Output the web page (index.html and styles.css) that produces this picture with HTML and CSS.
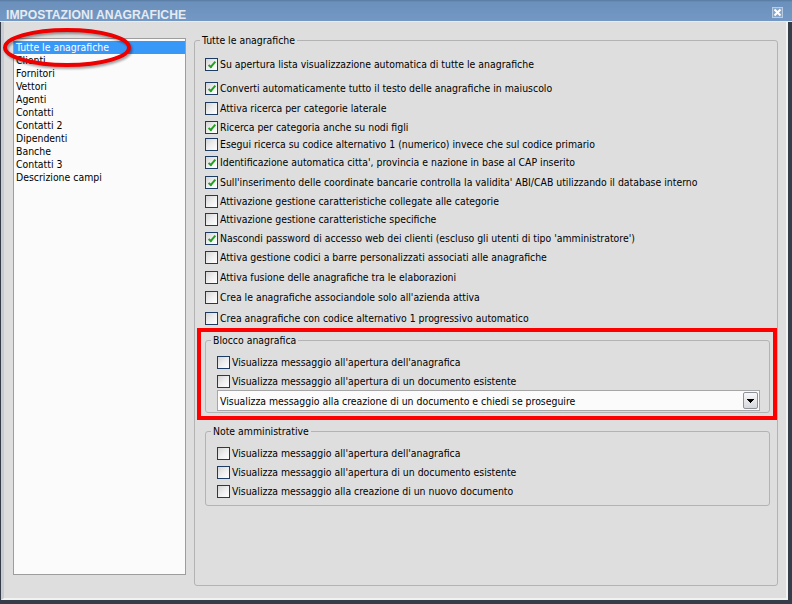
FILE: index.html
```html
<!DOCTYPE html>
<html lang="it">
<head>
    <meta charset="UTF-8">
    <meta name="viewport" content="width=device-width, initial-scale=1.0">
    <link rel="stylesheet" href="styles.css">
    <title>Impostazioni anagrafiche</title>
</head>
<body>
    <div class="window">
        <div class="titlebar">
            <span class="title">IMPOSTAZIONI ANAGRAFICHE</span>
            <span class="close-btn">
                <svg width="9" height="9" viewBox="0 0 9 9"><path d="M1.5 1.5 L7.5 7.5 M7.5 1.5 L1.5 7.5" stroke="#fff" stroke-width="2" fill="none"/></svg>
            </span>
        </div>
        <div class="frame">
            <div class="client">
                <ul class="list">
                    <li class="selected">Tutte le anagrafiche</li>
                    <li>Clienti</li>
                    <li>Fornitori</li>
                    <li>Vettori</li>
                    <li>Agenti</li>
                    <li>Contatti</li>
                    <li>Contatti 2</li>
                    <li>Dipendenti</li>
                    <li>Banche</li>
                    <li>Contatti 3</li>
                    <li>Descrizione campi</li>
                </ul>

                <fieldset class="group main-group">
                    <legend>Tutte le anagrafiche</legend>
                    <div class="options">
                        <div class="check"><span class="box checked"></span>Su apertura lista visualizzazione automatica di tutte le anagrafiche</div>
                        <div class="check"><span class="box checked"></span>Converti automaticamente tutto il testo delle anagrafiche in maiuscolo</div>
                        <div class="check"><span class="box"></span>Attiva ricerca per categorie laterale</div>
                        <div class="check"><span class="box checked"></span>Ricerca per categoria anche su nodi figli</div>
                        <div class="check"><span class="box"></span>Esegui ricerca su codice alternativo 1 (numerico) invece che sul codice primario</div>
                        <div class="check"><span class="box checked"></span>Identificazione automatica citta', provincia e nazione in base al CAP inserito</div>
                        <div class="check"><span class="box checked"></span>Sull'inserimento delle coordinate bancarie controlla la validita' ABI/CAB utilizzando il database interno</div>
                        <div class="check"><span class="box"></span>Attivazione gestione caratteristiche collegate alle categorie</div>
                        <div class="check"><span class="box"></span>Attivazione gestione caratteristiche specifiche</div>
                        <div class="check"><span class="box checked"></span>Nascondi password di accesso web dei clienti (escluso gli utenti di tipo 'amministratore')</div>
                        <div class="check"><span class="box"></span>Attiva gestione codici a barre personalizzati associati alle anagrafiche</div>
                        <div class="check"><span class="box"></span>Attiva fusione delle anagrafiche tra le elaborazioni</div>
                        <div class="check"><span class="box"></span>Crea le anagrafiche associandole solo all'azienda attiva</div>
                        <div class="check"><span class="box"></span>Crea anagrafiche con codice alternativo 1 progressivo automatico</div>
                    </div>

                    <!-- red frame marks the highlighted section -->
                    <div class="highlight">
                        <fieldset class="group sub-group">
                            <legend>Blocco anagrafica</legend>
                            <div class="sub-body">
                                <div class="check"><span class="box"></span>Visualizza messaggio all'apertura dell'anagrafica</div>
                                <div class="check"><span class="box"></span>Visualizza messaggio all'apertura di un documento esistente</div>
                                <div class="combo">
                                    <span>Visualizza messaggio alla creazione di un documento e chiedi se proseguire</span>
                                    <span class="combo-btn">
                                        <svg width="7" height="4" viewBox="0 0 7 4" shape-rendering="crispEdges"><polygon points="0,0 7,0 3.5,4" fill="#000"/></svg>
                                    </span>
                                </div>
                            </div>
                        </fieldset>
                    </div>

                    <fieldset class="group sub-group note-group">
                        <legend>Note amministrative</legend>
                        <div class="sub-body note-body">
                            <div class="check"><span class="box"></span>Visualizza messaggio all'apertura dell'anagrafica</div>
                            <div class="check"><span class="box"></span>Visualizza messaggio all'apertura di un documento esistente</div>
                            <div class="check"><span class="box"></span>Visualizza messaggio alla creazione di un nuovo documento</div>
                        </div>
                    </fieldset>
                </fieldset>
            </div>
        </div>

        <!-- red ring drawn over the list -->
        <svg class="ring" width="140" height="76" viewBox="0 0 140 76">
            <defs>
                <filter id="soft" x="-10%" y="-20%" width="120%" height="140%">
                    <feGaussianBlur stdDeviation="1.2"/>
                </filter>
            </defs>
            <ellipse cx="68.5" cy="49.5" rx="62" ry="17.5" fill="none" stroke="rgba(0,0,0,0.35)" stroke-width="4" filter="url(#soft)"/>
            <ellipse cx="67" cy="47.5" rx="62" ry="17.5" fill="none" stroke="#ee0000" stroke-width="4"/>
        </svg>
    </div>
</body>
</html>
```

FILE: styles.css
```css
body {
    margin: 0;
    font-family: "DejaVu Sans Condensed", "DejaVu Sans", sans-serif;
    font-stretch: condensed;
    font-size: 10.4px;
    color: #000;
}

.window {
    position: relative;
    width: 792px;
    height: 604px;
    display: flex;
    flex-direction: column;
    overflow: hidden;
}

/* Title bar */
.titlebar {
    height: 21px;
    flex: none;
    display: flex;
    justify-content: space-between;
    align-items: flex-start;
    padding: 0 9px 0 6px;
    background: linear-gradient(to bottom, #56789f 0, #6b90bc 2px, #7398c4 100%);
    border-bottom: 1px solid #e8ecf1;
}

.title {
    margin-top: 8px;
    font-family: "Liberation Sans", Arial, sans-serif;
    font-stretch: normal;
    font-weight: bold;
    font-size: 12.2px;
    line-height: 14px;
    color: #e6ebf2;
}

.close-btn {
    margin-top: 7px;
    width: 11px;
    height: 11px;
    box-sizing: border-box;
    border: 1px solid #b9cbe1;
    background: #86a6cd;
    display: flex;
    align-items: center;
    justify-content: center;
}

.close-btn svg {
    display: block;
}

/* Window frame */
.frame {
    flex: 1;
    display: flex;
    border: 0 solid #353d49;
    border-width: 0 4px 4px 1px;
}

.client {
    flex: 1;
    display: flex;
    align-items: flex-start;
    padding: 12px 0 0 9px;
    background-color: #dedede;
    border-left: 3px solid #c9cdd3;
    border-right: 2px solid #f2f2f2;
    border-bottom: 2px solid #f2f2f2;
}

/* Left list */
.list {
    list-style: none;
    margin: 4px 0 0 0;
    padding: 2px 0 0 0;
    width: 173px;
    height: 537px;
    box-sizing: border-box;
    border: 1px solid #9d9d9d;
    background-color: #fbfbfb;
}

.list li {
    height: 13px;
    line-height: 13px;
    padding-left: 2px;
    white-space: nowrap;
}

.list li.selected {
    background-color: #3898f8;
    color: #fff;
}

/* Group boxes */
.group {
    margin: 0;
    padding: 0;
    min-width: 0;
    box-sizing: border-box;
    border: 1px solid #b3b3b3;
    border-radius: 3px;
}

.group legend {
    margin-left: 5px;
    padding: 0 2px;
    line-height: 13px;
}

.main-group {
    margin-left: 8px;
    width: 584px;
    height: 552px;
}

.options {
    display: grid;
    grid-template-rows: 24px 20px 19px 17px 18px 20px 19px 18px 19px 19px 20px 20px 21px 13px;
    margin: 11px 0 0 10px;
}

.check {
    display: flex;
    align-items: center;
    gap: 2px;
    height: 13px;
    line-height: 13px;
    white-space: nowrap;
}

.box {
    position: relative;
    flex: none;
    width: 13px;
    height: 13px;
    box-sizing: border-box;
    border: 1px solid #1d3c64;
    background: linear-gradient(135deg, #d5d5d5 0%, #eeeeee 50%, #ffffff 100%);
}

.box.checked::after {
    content: "";
    position: absolute;
    left: 4px;
    top: 1px;
    width: 2px;
    height: 6px;
    border: solid #22a022;
    border-width: 0 2px 2px 0;
    transform: rotate(40deg);
}

/* Red frame */
.highlight {
    margin: 3px 0 0 2px;
    width: 580px;
    box-sizing: border-box;
    border: 4px solid #ff0000;
    padding: 2px 0 3px 4px;
}

.sub-group {
    width: 565px;
}

.sub-body {
    display: flex;
    flex-direction: column;
    gap: 6px;
    padding: 9px 0 1px 11px;
}

.note-group {
    margin: 5px 0 0 10px;
}

.note-body {
    padding-bottom: 7px;
}

/* Drop-down */
.combo {
    margin-top: -4px;
    width: 543px;
    height: 21px;
    box-sizing: border-box;
    border: 1px solid #a6a6a6;
    background-color: #fbfbfb;
    display: flex;
    align-items: center;
    justify-content: space-between;
    padding: 0 1px 0 2px;
    white-space: nowrap;
}

.combo-btn {
    width: 15px;
    height: 17px;
    box-sizing: border-box;
    border: 1px solid #8d929a;
    border-radius: 2px;
    background: linear-gradient(to bottom, #f8f8f9, #d6d8dd);
    display: flex;
    align-items: center;
    justify-content: center;
}

.combo-btn svg {
    display: block;
}

.ring {
    position: absolute;
    left: 0;
    top: 0;
    pointer-events: none;
}
```
